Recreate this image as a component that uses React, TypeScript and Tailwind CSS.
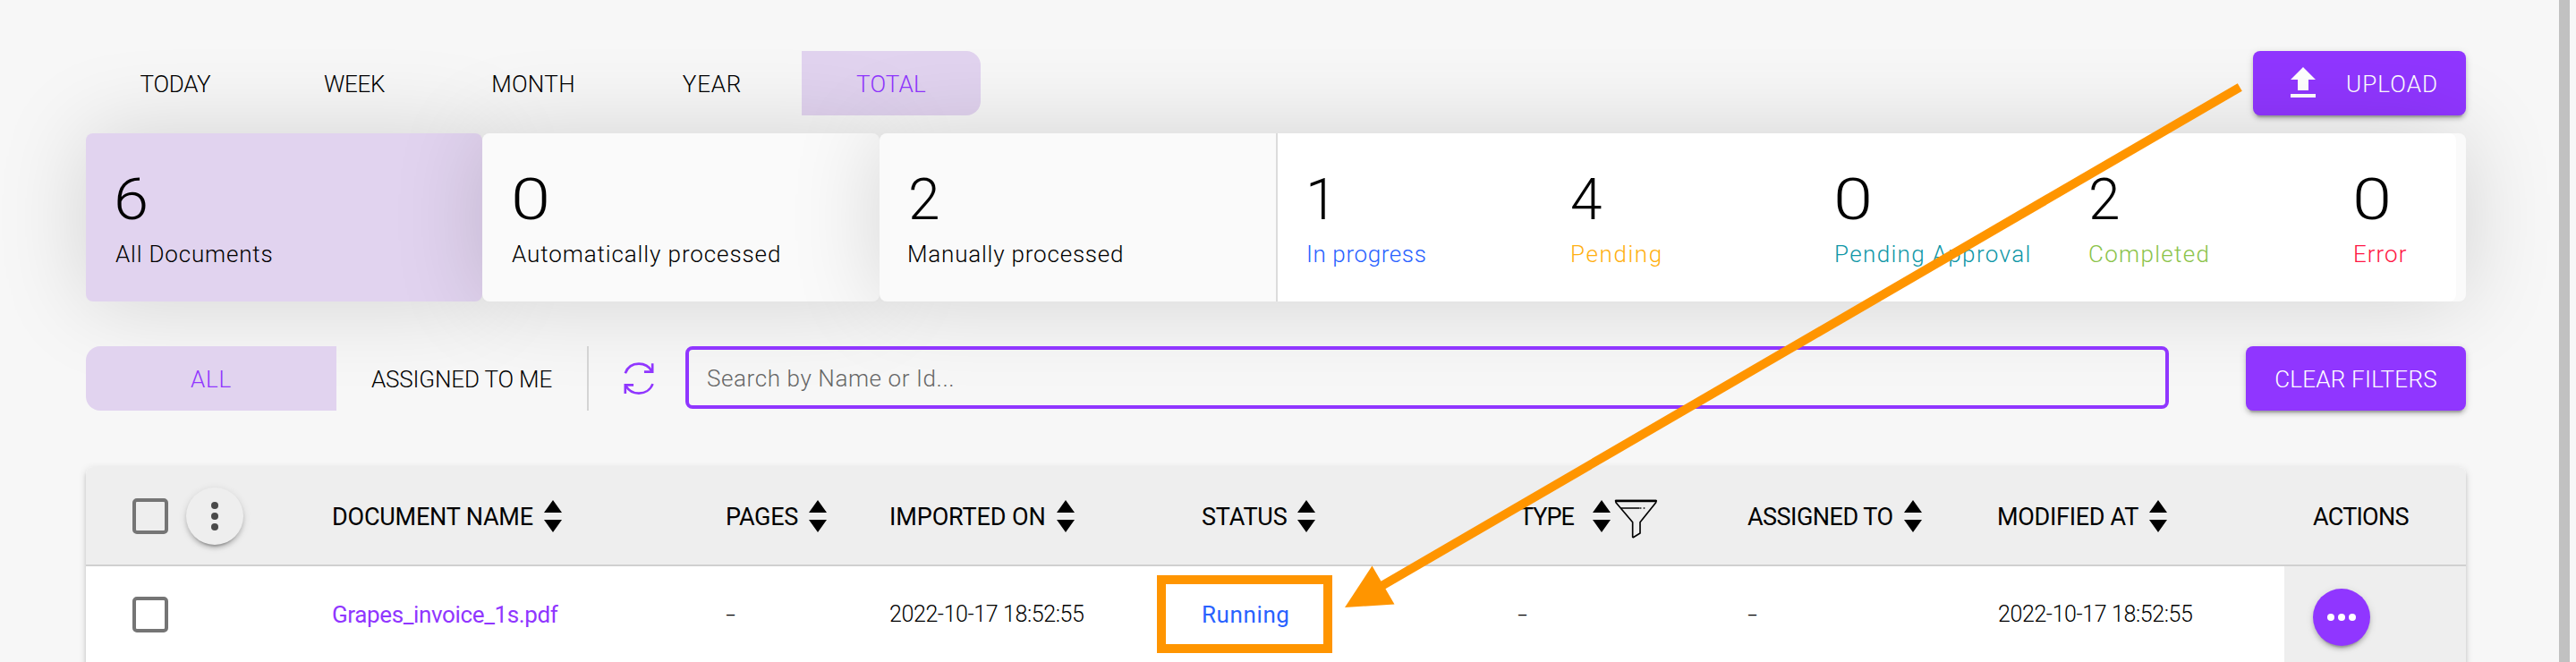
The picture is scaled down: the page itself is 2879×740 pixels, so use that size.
import React from "react";

const raised =
  "shadow-[0_6px_2px_-4px_rgba(0,0,0,0.2),0_4px_4px_0_rgba(0,0,0,0.14),0_2px_10px_0_rgba(0,0,0,0.12)]";
const halo = "shadow-[0_0_100px_rgba(0,0,0,0.15)]";

const periods = [
  { label: "TODAY", cls: "tracking-[-0.28px]" },
  { label: "WEEK", cls: "tracking-[-0.3px]" },
  { label: "MONTH", cls: "tracking-[0.32px]" },
  { label: "YEAR", cls: "tracking-[0.79px]" },
  {
    label: "TOTAL",
    cls: "tracking-[0.2px] rounded-r-2xl bg-[#e1d3ef] text-[#9036ff]",
  },
];

const digitShape: Record<string, string> = {
  "0": "scale-x-[1.24] ml-[-1px]",
  "6": "scale-x-[1.1] ml-[-1px]",
  "1": "ml-[-1px]",
  "2": "",
  "4": "",
};

function Stat({ value, label, cls }: { value: string; label: string; cls: string }) {
  return (
    <div className="flex flex-col items-start pt-[43px]">
      <span className={`inline-block origin-left text-[64px] leading-[64px] text-black ${digitShape[value]}`}>
        {value}
      </span>
      <span className={`mt-3 text-[26px] leading-8 whitespace-nowrap ${cls}`}>{label}</span>
    </div>
  );
}

function SortArrows({ cls = "ml-3" }: { cls?: string }) {
  return (
    <svg className={`h-9 w-5 shrink-0 ${cls}`} viewBox="0 0 20 36">
      <path d="M10 0L20 14H0zM0 22H20L10 36z" fill="#000" />
    </svg>
  );
}

function Funnel() {
  return (
    <svg className="mt-[7px] ml-1 h-[44px] w-[48px] shrink-0" viewBox="368 54 144 132" fill="none" stroke="#000" strokeWidth="5" strokeLinejoin="round" strokeLinecap="round">
      <path d="M373 59H509L508 65L455 131V168L432 182L430 181V131L374 65Z" />
      <path d="M374 60H508" strokeWidth="7" />
      <path d="M392 84H452M457 84H457.5M468 84H469" />
    </svg>
  );
}

function Refresh() {
  return (
    <svg className="h-[36px] w-[34px] shrink-0" viewBox="51 74 102 109" fill="none" stroke="#9036ff" strokeWidth="8">
      <path d="M56 111C64 89 82 79 102 79C120 79 136 87 146 104" />
      <path d="M148 78V106H120" />
      <path d="M149 147C141 168 122 179 102 179C84 179 68 171 58 154" />
      <path d="M56 180V151H84" />
    </svg>
  );
}

function Checkbox() {
  return <div className="ml-[52px] h-10 w-10 shrink-0 rounded-[5px] border-4 border-[#757575]" />;
}

const headers = [
  { label: "DOCUMENT NAME", cls: "tracking-[-0.2px]" },
  { label: "PAGES", cls: "tracking-[-0.3px]" },
  { label: "IMPORTED ON", cls: "tracking-[-0.1px]" },
  { label: "STATUS", cls: "tracking-[-0.2px]" },
  { label: "TYPE", cls: "tracking-[-1px]" },
  { label: "ASSIGNED TO", cls: "tracking-[-0.52px]" },
  { label: "MODIFIED AT", cls: "tracking-[-0.3px]" },
];

const columns = "grid grid-cols-[275px_440px_183px_349px_350px_260px_279px_321px_203px]";

function Dash() {
  return <span className="inline-block origin-left scale-x-150 text-[26px] leading-8 font-light">-</span>;
}

export default function App() {
  return (
    <div className="relative flex h-[740px] w-[2879px] overflow-hidden bg-[#f7f7f7] font-['Roboto',sans-serif] font-light text-black">
      <main className="ml-24 flex w-[2660px] shrink-0 flex-col pt-[57px]">
        <div className="flex h-[72px] shrink-0 justify-between">
          <div className="flex">
            {periods.map((p) => (
              <button key={p.label} className={`w-[200px] pt-[2px] text-[26px] leading-8 ${p.cls}`}>
                {p.label}
              </button>
            ))}
          </div>
          <button className={`flex w-[238px] items-center rounded-lg bg-[#9036ff] pl-8 text-white ${raised}`}>
            <svg className="h-12 w-12" viewBox="0 0 24 24" fill="currentColor">
              <path d="M9 16h6v-6h4l-7-7-7 7h4zm-4 2h14v2H5z" />
            </svg>
            <span className="ml-6 pt-[2px] text-[26px] leading-8 tracking-[1.08px]">UPLOAD</span>
          </button>
        </div>

        <div className="relative mt-5 flex h-[188px] shrink-0">
          <div className={`w-[443px] rounded-lg bg-[#e1d3ef] pl-8 ${halo}`}>
            <Stat value="6" label="All Documents" cls="ml-[1px] tracking-[0.81px]" />
          </div>
          <div className={`relative w-[444px] rounded-lg bg-[#fafafa] pl-[33px] ${halo}`}>
            <Stat value="0" label="Automatically processed" cls="tracking-[0.9px]" />
          </div>
          <div className={`relative flex w-[1773px] rounded-lg bg-[#fafafa] ${halo}`}>
            <div className="w-[445px] border-r-2 border-[#dcdcdc] pl-8">
              <Stat value="2" label="Manually processed" cls="ml-[-1px] tracking-[0.8px]" />
            </div>
            <div className="grid w-[1317px] grid-cols-[295px_295px_284px_296px_1fr] rounded-r-lg bg-white pl-8">
              <Stat value="1" label="In progress" cls="tracking-[0.6px] text-[#2962ff]" />
              <Stat value="4" label="Pending" cls="tracking-[1.6px] text-[#ffb010]" />
              <Stat value="0" label="Pending Approval" cls="tracking-[1.35px] text-[#1097a7]" />
              <Stat value="2" label="Completed" cls="tracking-[1.3px] text-[#8bc34a]" />
              <Stat value="0" label="Error" cls="tracking-[1px] text-[#ff1744]" />
            </div>
          </div>
        </div>

        <div className="relative mt-[50px] flex h-[72px] shrink-0">
          <button className="w-[280px] rounded-l-2xl bg-[#e1d3ef] pt-[2px] text-[26px] leading-8 tracking-[0.77px] text-[#9036ff]">
            ALL
          </button>
          <button className="w-[282px] border-r-2 border-[#d4d4d4] pt-[2px] text-[26px] leading-8 tracking-[-0.16px]">
            ASSIGNED TO ME
          </button>
          <div className="ml-[39px] flex items-center">
            <Refresh />
          </div>
          <div className="ml-[35px] flex h-[70px] w-[1658px] items-center rounded-lg border-4 border-[#9036ff] pt-[2px] pl-5 text-[26px] leading-8 tracking-[0.6px] text-[#666]">
            Search by Name or Id...
          </div>
          <button className={`ml-auto w-[246px] rounded-lg bg-[#9036ff] pt-[2px] text-[26px] leading-8 tracking-[0.24px] text-white ${raised}`}>
            CLEAR FILTERS
          </button>
        </div>

        <div className={`mt-[63px] h-[260px] shrink-0 rounded-t-lg bg-white ${raised}`}>
          <div className={`${columns} h-[111px] items-center rounded-t-lg border-b-2 border-[#d0d0d0] bg-[#eee]`}>
            <div className="flex items-center">
              <Checkbox />
              <div className={`ml-5 flex h-16 w-16 flex-col items-center justify-center gap-1 rounded-full bg-[#eee] ${raised}`}>
                <i className="h-2 w-2 rounded-full bg-[#4a4a4a]" />
                <i className="h-2 w-2 rounded-full bg-[#4a4a4a]" />
                <i className="h-2 w-2 rounded-full bg-[#4a4a4a]" />
              </div>
            </div>
            {headers.map((h) => (
              <div key={h.label} className={h.label === "TYPE" ? "ml-[5px] flex h-11 items-center" : "flex h-11 items-center"}>
                <span className={`pt-[3px] text-[27px] leading-8 font-normal whitespace-nowrap ${h.cls}`}>{h.label}</span>
                <SortArrows cls={h.label === "TYPE" ? "ml-[21px]" : "ml-3"} />
                {h.label === "TYPE" && <Funnel />}
              </div>
            ))}
            <div className="pt-[3px] pl-8 text-[27px] leading-8 font-normal tracking-[-0.75px]">ACTIONS</div>
          </div>
          <div className={`${columns} h-[108px] items-center text-[25px] leading-8`}>
            <Checkbox />
            <span className="text-[26px] font-normal tracking-[-0.37px] text-[#9036ff]">Grapes_invoice_1s.pdf</span>
            <Dash />
            <span className="tracking-[-0.4px] whitespace-nowrap">2022-10-17 18:52:55</span>
            <span className="text-[26px] font-normal tracking-[0.6px] text-[#2962ff]">Running</span>
            <span className="pl-[3px]">
              <Dash />
            </span>
            <Dash />
            <span className="ml-[1px] tracking-[-0.4px] whitespace-nowrap">2022-10-17 18:52:55</span>
            <div className="flex h-full items-center self-stretch bg-[#eee] pt-[6px] pl-8">
              <div className={`flex h-16 w-16 items-center justify-center gap-1 rounded-full bg-[#9036ff] ${raised}`}>
                <i className="h-2 w-2 rounded-full bg-white" />
                <i className="h-2 w-2 rounded-full bg-white" />
                <i className="h-2 w-2 rounded-full bg-white" />
              </div>
            </div>
          </div>
        </div>
      </main>

      <div className="ml-[104px] w-3 bg-[#c1c1c1]" />

      <svg className="pointer-events-none absolute top-0 left-0 h-[740px] w-[2879px]" viewBox="0 0 2879 740">
        <rect x="1298" y="648" width="186" height="77" fill="none" stroke="#ff9500" strokeWidth="10" />
        <path d="M2503.3 97.5L1545 654.5" stroke="#ff9500" strokeWidth="10" />
        <path d="M1503 679L1533.5 632.5L1558.5 675.5Z" fill="#ff9500" />
      </svg>
    </div>
  );
}
